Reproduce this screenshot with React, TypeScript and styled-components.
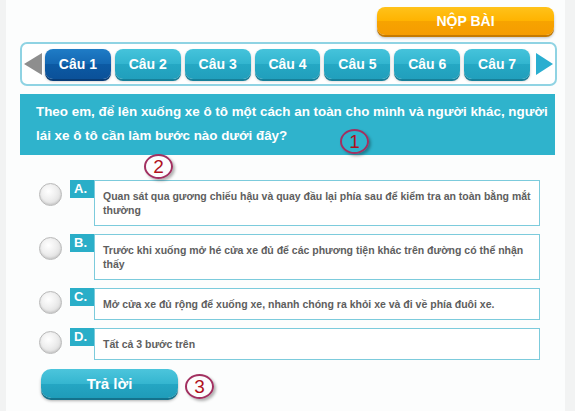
import React from 'react';
import styled, { createGlobalStyle } from 'styled-components';

const GlobalStyle = createGlobalStyle`
    html, body {
        margin: 0;
        padding: 0;
        background: #f2f3f3;
        font-family: "Liberation Sans", Arial, sans-serif;
    }
`;

const Page = styled.div`
    position: relative;
    width: 559px;
    height: 411px;
    margin-left: 6px;
    background: #fcfdfd;
    box-sizing: border-box;
    padding: 7px 10px 0 14px;
    overflow: hidden;
`;

const TopRow = styled.div`
    display: flex;
    justify-content: flex-end;
    padding-right: 1px;
`;

const SubmitBut = styled.button`
    width: 177px;
    height: 28px;
    border: none;
    border-radius: 8px;
    background: linear-gradient(#ffc21a 0%, #ffb300 50%, #f7a300 51%, #f59c00 100%);
    box-shadow: 0 2px 0 #c57a00, 0 3px 3px rgba(0, 0, 0, 0.25);
    color: #fff;
    font-family: "Liberation Sans", Arial, sans-serif;
    font-size: 14px;
    font-weight: 700;
    padding: 0;
`;

const TabBar = styled.div`
    margin-top: 7px;
    margin-right: -2px;
    height: 44px;
    box-sizing: border-box;
    border: 2px solid #8fd3e3;
    border-radius: 7px;
    background: #fff;
    display: flex;
    align-items: center;
    padding: 0 2px;
    gap: 4px;
`;

const Arrow = styled.div<{ $dir: 'left' | 'right' }>`
    width: 0;
    height: 0;
    border-top: 11px solid transparent;
    border-bottom: 11px solid transparent;
    ${p => p.$dir === 'left'
        ? 'border-right: 18px solid #8e8e8e; margin-right: -1px;'
        : 'border-left: 17px solid #2aaed0; margin-left: 2px;'}
`;

const Tab = styled.button<{ $active?: boolean }>`
    width: 66px;
    height: 30px;
    border: none;
    border-radius: 8px;
    padding: 0;
    color: #fff;
    font-family: "Liberation Sans", Arial, sans-serif;
    font-size: 14px;
    font-weight: 700;
    background: ${p => p.$active
        ? 'linear-gradient(#1f7cc6 0%, #1468b3 50%, #0c5aa4 51%, #0b5199 100%)'
        : 'linear-gradient(#45c3db 0%, #32b5cf 50%, #25a8c4 51%, #219fbc 100%)'};
    box-shadow: ${p => p.$active
        ? '0 2px 0 #083d78, 0 2px 3px rgba(0,0,0,0.3)'
        : '0 2px 0 #17809a, 0 2px 3px rgba(0,0,0,0.25)'};
`;

const Question = styled.div`
    margin-top: 8px;
    height: 61px;
    box-sizing: border-box;
    background: #2fb3cc;
    color: #fff;
    font-size: 13.4px;
    font-weight: 700;
    line-height: 24px;
    padding: 6px 3px 0 16px;
`;

const Options = styled.div`
    margin-top: 25px;
    padding: 0 15px 0 19px;
    display: flex;
    flex-direction: column;
    gap: 8px;
`;

const Option = styled.div`
    display: flex;
    align-items: flex-start;
`;

const Radio = styled.span`
    flex: none;
    width: 21px;
    height: 21px;
    margin: 3px 8px 0 0;
    border-radius: 50%;
    border: 1px solid #b9b9b9;
    background: radial-gradient(circle at 40% 35%, #ffffff 0%, #eeeeee 45%, #d2d2d2 100%);
    box-shadow: inset 0 -1px 2px rgba(0, 0, 0, 0.12);
`;

const Letter = styled.span`
    flex: none;
    width: 24px;
    height: 18px;
    background: #2aaec8;
    color: #fff;
    font-size: 13px;
    font-weight: 700;
    line-height: 17px;
    box-sizing: border-box;
    padding-left: 4px;
`;

const Answer = styled.div`
    flex: 1;
    border: 1px solid #7ccbdc;
    background: #fff;
    color: #5e5e5e;
    font-size: 10.5px;
    font-weight: 700;
    line-height: 14px;
    padding: 8px 8px 8px 8px;
`;

const AnswerBut = styled.button`
    margin: 9px 0 0 21px;
    width: 137px;
    height: 29px;
    border: none;
    border-radius: 10px;
    padding: 0;
    color: #fff;
    font-family: "Liberation Sans", Arial, sans-serif;
    font-size: 15px;
    font-weight: 700;
    background: linear-gradient(#4cc5dc 0%, #35b6d0 50%, #25a6c3 51%, #1f9cb9 100%);
    box-shadow: 0 2px 0 #14728c, 0 3px 3px rgba(0, 0, 0, 0.3);
`;

const Mark = styled.span<{ $x: number; $y: number }>`
    position: absolute;
    left: ${p => p.$x}px;
    top: ${p => p.$y}px;
    width: 25px;
    height: 21px;
    border: 2px solid #a23060;
    border-radius: 50%;
    color: #b0101c;
    font-size: 19px;
    line-height: 21px;
    text-align: center;
    box-shadow: 2px 2px 3px rgba(0, 0, 0, 0.3);
`;

const tabs = ['Câu 1', 'Câu 2', 'Câu 3', 'Câu 4', 'Câu 5', 'Câu 6', 'Câu 7'];

const answers = [
    { key: 'A.', text: 'Quan sát qua gương chiếu hậu và quay đầu lại phía sau để kiểm tra an toàn bằng mắt thường' },
    { key: 'B.', text: 'Trước khi xuống mở hé cửa xe đủ để các phương tiện khác trên đường có thể nhận thấy' },
    { key: 'C.', text: 'Mở cửa xe đủ rộng để xuống xe, nhanh chóng ra khỏi xe và đi về phía đuôi xe.' },
    { key: 'D.', text: 'Tất cả 3 bước trên' },
];

const App = () => {
    return (
        <>
            <GlobalStyle />
            <Page>
                <TopRow>
                    <SubmitBut>NỘP BÀI</SubmitBut>
                </TopRow>
                <TabBar>
                    <Arrow $dir="left" />
                    {tabs.map((t, i) => (
                        <Tab key={t} $active={i === 0}>{t}</Tab>
                    ))}
                    <Arrow $dir="right" />
                </TabBar>
                <Question>
                    Theo em, để lên xuống xe ô tô một cách an toàn cho mình và người khác, người lái xe ô tô cần làm bước nào dưới đây?
                </Question>
                <Options>
                    {answers.map(a => (
                        <Option key={a.key}>
                            <Radio />
                            <Letter>{a.key}</Letter>
                            <Answer>{a.text}</Answer>
                        </Option>
                    ))}
                </Options>
                <AnswerBut>Trả lời</AnswerBut>
                <Mark $x={334} $y={129}>1</Mark>
                <Mark $x={138} $y={154}>2</Mark>
                <Mark $x={179} $y={374}>3</Mark>
            </Page>
        </>
    );
};

export default App;
